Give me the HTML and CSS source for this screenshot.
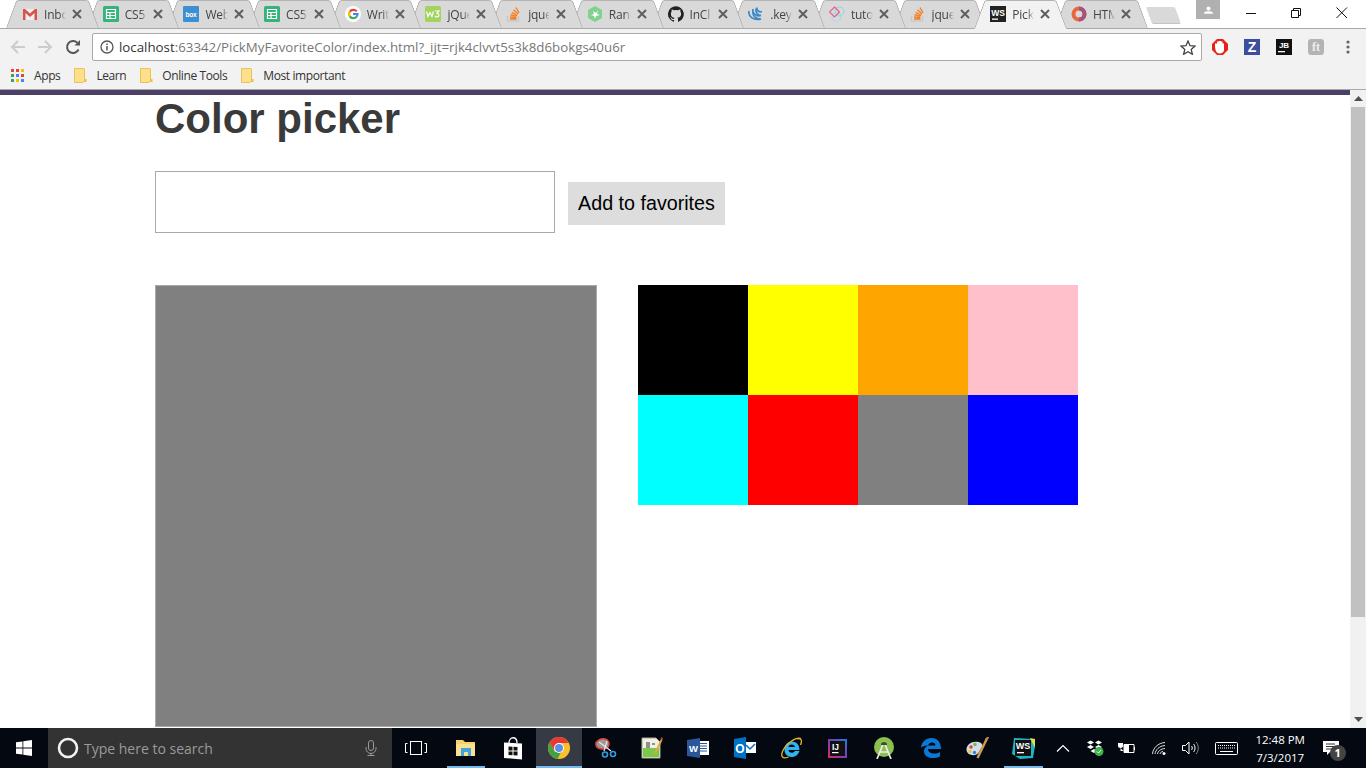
FILE: index.html
```html
<!DOCTYPE html>
<html lang="en">
<head>
    <meta charset="UTF-8">
    <meta name="viewport" content="width=device-width, initial-scale=1.0">
    <title>Color picker</title>
    <link rel="stylesheet" href="styles.css">
</head>
<body>
    <svg class="defs" width="0" height="0">
        <symbol id="i-close" viewBox="0 0 10 10"><path d="M1 1l8 8M9 1l-8 8" stroke="#5f5f5f" stroke-width="2" fill="none"/></symbol>
        <symbol id="i-sheets" viewBox="0 0 16 16"><rect width="16" height="16" rx="1.500" fill="#36b37a"/><path d="M3.500 3.500h9v9h-9zM3.500 6.500h9M3.500 9.500h9M7 6.500v6" fill="none" stroke="#fff" stroke-width="1.200"/></symbol>
        <symbol id="i-so" viewBox="0 0 16 16"><path d="M1.500 10v5h11v-5" fill="none" stroke="#c9c9c9" stroke-width="1.300"/><path d="M4 13h6.500M4 11l6.300.7M4.500 8.800l6 1.600M5.700 6.300l5.500 3M7.500 3.700l4.500 4.300M10 1.500l3 5.300" fill="none" stroke="#f48024" stroke-width="1.400"/></symbol>
        <symbol id="i-ws" viewBox="0 0 16 16"><rect width="16" height="16" fill="#222"/><text x="8" y="9.500" text-anchor="middle" font-family="Liberation Sans" font-size="8.500" font-weight="700" fill="#fff">WS</text><rect x="2" y="12.500" width="6" height="1.300" fill="#fff"/></symbol>
        <symbol id="i-folder" viewBox="0 0 13 15"><path d="M.5.500h9.500l.5.500v11.500l-1.500 2H.5z" fill="#ffe08a" stroke="#e8c25a"/><rect x="10" y="11" width="2.500" height="3" fill="#f0c040"/></symbol>
    </svg>

    <div class="browser">
        <div class="tabstrip">
            <div class="tabs">
                <div class="tab">
                    <svg class="favicon" viewBox="0 0 16 16"><path d="M1 3h14v11H1z" fill="#eee"/><path d="M1 14V3h2l5 4.500L13 3h2v11h-2.500V7L8 11 3.500 7v7z" fill="#d9534a"/></svg>
                    <span class="tab-title">Inbox</span>
                    <svg class="tab-close"><use href="#i-close"/></svg>
                </div>
                <div class="tab">
                    <svg class="favicon"><use href="#i-sheets"/></svg>
                    <span class="tab-title">CS5</span>
                    <svg class="tab-close"><use href="#i-close"/></svg>
                </div>
                <div class="tab">
                    <svg class="favicon" viewBox="0 0 16 16"><rect width="16" height="16" rx="1" fill="#3d8fd1"/><text x="8" y="10.500" text-anchor="middle" font-family="Liberation Sans" font-size="6.500" font-weight="700" fill="#fff">box</text></svg>
                    <span class="tab-title">Web</span>
                    <svg class="tab-close"><use href="#i-close"/></svg>
                </div>
                <div class="tab">
                    <svg class="favicon"><use href="#i-sheets"/></svg>
                    <span class="tab-title">CS5</span>
                    <svg class="tab-close"><use href="#i-close"/></svg>
                </div>
                <div class="tab">
                    <svg class="favicon" viewBox="0 0 16 16"><circle cx="8" cy="8" r="8" fill="#fff"/><path d="M12.500 4.600A5.600 5.600 0 0 0 4 4.800L5.600 6.500A3.500 3.500 0 0 1 11 6z" fill="#ea4335"/><path d="M4 4.800a5.600 5.600 0 0 0 0 6.400l1.600-1.700a3.500 3.500 0 0 1 0-3z" fill="#fbbc05"/><path d="M4 11.200a5.600 5.600 0 0 0 8.300.4l-1.700-1.400a3.500 3.500 0 0 1-5-.7z" fill="#34a853"/><path d="M8 7v2h3.300a3 3 0 0 1-.7 1.200l1.700 1.400A5.500 5.500 0 0 0 13.600 7z" fill="#4285f4"/></svg>
                    <span class="tab-title">Write</span>
                    <svg class="tab-close"><use href="#i-close"/></svg>
                </div>
                <div class="tab">
                    <svg class="favicon" viewBox="0 0 16 16"><rect width="16" height="16" rx="2" fill="#a2d35f"/><path d="M1.500 5.500l1.500 5 2-4 2 4 1.500-5M10 5h4l-2 2.500c2.500 0 2.500 3.500 0 3.500-1 0-1.500-.5-2-1" fill="none" stroke="#fff" stroke-width="1.200"/></svg>
                    <span class="tab-title">jQuery</span>
                    <svg class="tab-close"><use href="#i-close"/></svg>
                </div>
                <div class="tab">
                    <svg class="favicon"><use href="#i-so"/></svg>
                    <span class="tab-title">jquery</span>
                    <svg class="tab-close"><use href="#i-close"/></svg>
                </div>
                <div class="tab">
                    <svg class="favicon" viewBox="0 0 16 16"><path d="M8 0l7 4v8l-7 4-7-4V4z" fill="#7fd18c"/><path d="M4 9l3-1-1-3 3 2 2-3-1 4 3 1-4 1-1 3-1-3z" fill="#fff"/></svg>
                    <span class="tab-title">Rand</span>
                    <svg class="tab-close"><use href="#i-close"/></svg>
                </div>
                <div class="tab">
                    <svg class="favicon" viewBox="0 0 16 16"><path d="M8 .2a8 8 0 0 0-2.500 15.600c.4.1.5-.2.5-.4v-1.400c-2.200.5-2.700-1-2.700-1-.4-.9-.9-1.200-.9-1.200-.7-.5.1-.5.1-.5.800.1 1.200.8 1.200.8.700 1.200 1.900.9 2.300.7.100-.5.300-.9.500-1.100-1.800-.2-3.600-.9-3.600-4 0-.9.300-1.600.8-2.100-.1-.2-.4-1 .1-2.100 0 0 .7-.2 2.200.8a7.600 7.600 0 0 1 4 0c1.500-1 2.200-.8 2.200-.8.400 1.100.2 1.900.1 2.100.5.600.8 1.300.8 2.100 0 3.100-1.900 3.700-3.700 3.900.3.300.6.700.6 1.500v2.200c0 .2.100.5.600.4A8 8 0 0 0 8 .2z" fill="#222"/></svg>
                    <span class="tab-title">InCl</span>
                    <svg class="tab-close"><use href="#i-close"/></svg>
                </div>
                <div class="tab">
                    <svg class="favicon" viewBox="0 0 16 16"><path d="M1 5c-1 5 4 10 12 8-5 0-9-3-8-8M5 3c-1 4 3 8 8 6.500-3.500 0-5.500-3-5-7M9 1.500c-.5 3 2 5 5 4" fill="none" stroke="#3f88c5" stroke-width="1.700"/></svg>
                    <span class="tab-title">.keyup</span>
                    <svg class="tab-close"><use href="#i-close"/></svg>
                </div>
                <div class="tab">
                    <svg class="favicon" viewBox="0 0 16 16"><circle cx="10.500" cy="5.500" r="4.500" fill="none" stroke="#7fe0d8"/><circle cx="7.500" cy="11" r="4.500" fill="none" stroke="#a8d4f5"/><path d="M5.500 1l5 5-5 5-5-5z" fill="none" stroke="#ef5b8d" stroke-width="1.200"/></svg>
                    <span class="tab-title">tutorial</span>
                    <svg class="tab-close"><use href="#i-close"/></svg>
                </div>
                <div class="tab">
                    <svg class="favicon"><use href="#i-so"/></svg>
                    <span class="tab-title">jquery</span>
                    <svg class="tab-close"><use href="#i-close"/></svg>
                </div>
                <div class="tab tab-active">
                    <svg class="favicon"><use href="#i-ws"/></svg>
                    <span class="tab-title">Pick</span>
                    <svg class="tab-close"><use href="#i-close"/></svg>
                </div>
                <div class="tab">
                    <svg class="favicon" viewBox="0 0 16 16"><circle cx="8" cy="8" r="5.500" fill="none" stroke="#e8673c" stroke-width="4"/><path d="M8 2.500a5.500 5.500 0 0 1 0 11" fill="none" stroke="#a4527e" stroke-width="4"/></svg>
                    <span class="tab-title">HTML</span>
                    <svg class="tab-close"><use href="#i-close"/></svg>
                </div>
            </div>
            <div class="newtab"></div>
            <div class="win-controls">
                <div class="profile">
                    <svg width="9" height="8" viewBox="0 0 12 10"><circle cx="6" cy="3" r="2.700" fill="#fff"/><path d="M0 10c0-3 3-3.500 6-3.500s6 .5 6 3.500z" fill="#fff"/></svg>
                </div>
                <div class="win-btn"><svg width="12" height="12" viewBox="0 0 12 12"><path d="M1 6.500h10" stroke="#111"/></svg></div>
                <div class="win-btn"><svg width="12" height="12" viewBox="0 0 12 12"><path d="M1.500 3.500h7v7h-7zM3.500 3.500V1.500h7v7H8.500" fill="none" stroke="#111"/></svg></div>
                <div class="win-btn"><svg width="12" height="12" viewBox="0 0 12 12"><path d="M.5.500l10.500 10.500M11 .5L.5 11" stroke="#111" fill="none"/></svg></div>
            </div>
        </div>

        <div class="toolbar">
            <div class="tool-btn"><svg width="16" height="16" viewBox="0 0 16 16"><path d="M15 8H2M8 2L2 8l6 6" fill="none" stroke="#ccc" stroke-width="2"/></svg></div>
            <div class="tool-btn"><svg width="16" height="16" viewBox="0 0 16 16"><path d="M1 8h13M8 2l6 6-6 6" fill="none" stroke="#ccc" stroke-width="2"/></svg></div>
            <div class="tool-btn"><svg width="16" height="16" viewBox="0 0 16 16"><path d="M13.500 10.500A6 6 0 1 1 12.300 3.800" fill="none" stroke="#555" stroke-width="2"/><path d="M9.500 6.500H15V1z" fill="#555"/></svg></div>
            <div class="omnibox">
                <svg class="info-icon" width="14" height="14" viewBox="0 0 14 14"><circle cx="7" cy="7" r="6" fill="none" stroke="#555" stroke-width="1.300"/><path d="M7 6v4.500M7 3.500v1.500" stroke="#555" stroke-width="1.500"/></svg>
                <span class="url"><span class="url-host">localhost</span>:63342/PickMyFavoriteColor/index.html?_ijt=rjk4clvvt5s3k8d6bokgs40u6r</span>
                <svg width="16" height="15" viewBox="0 0 16 15"><path d="M8 1l2 4.700 5 .4-3.800 3.300 1.200 4.900L8 11.700l-4.400 2.600 1.200-4.900L1 6.100l5-.4z" fill="none" stroke="#444" stroke-width="1.300"/></svg>
            </div>
            <div class="ext-btn"><svg width="16" height="16" viewBox="0 0 16 16"><path d="M5 0h6l5 5v6l-5 5H5l-5-5V5z" fill="#e8211d"/><path d="M3 8V4.500h2V2.500h1.500V2h2.500v.5h1.500v2h1.500V11c0 2-2 3.500-4.500 3.500S4.500 13 3.500 11z" fill="#fff"/></svg></div>
            <div class="ext-btn"><svg width="16" height="16" viewBox="0 0 16 16"><rect width="16" height="16" fill="#3b4f9c"/><text x="8" y="13" text-anchor="middle" font-family="Liberation Sans" font-size="14" font-weight="700" fill="#fff">Z</text></svg></div>
            <div class="ext-btn"><svg width="16" height="16" viewBox="0 0 16 16"><rect width="16" height="16" fill="#111"/><text x="8" y="9" text-anchor="middle" font-family="Liberation Sans" font-size="8" font-weight="700" fill="#fff">JB</text><rect x="2" y="12" width="7" height="1.300" fill="#fff"/></svg></div>
            <div class="ext-btn"><svg width="16" height="16" viewBox="0 0 16 16"><rect width="16" height="16" rx="3" fill="#b4b4b4"/><text x="8" y="12" text-anchor="middle" font-family="Liberation Serif" font-size="12" font-weight="700" fill="#eee">ft</text></svg></div>
            <div class="ext-btn"><svg width="4" height="14" viewBox="0 0 4 14"><circle cx="2" cy="2" r="1.600" fill="#666"/><circle cx="2" cy="7" r="1.600" fill="#666"/><circle cx="2" cy="12" r="1.600" fill="#666"/></svg></div>
        </div>

        <div class="bookmarks">
            <div class="bookmark bookmark-apps">
                <svg width="13" height="13" viewBox="0 0 13 13">
                    <rect width="3" height="3" fill="#ea4335"/><rect x="5" width="3" height="3" fill="#ea4335"/><rect x="10" width="3" height="3" fill="#fbbc05"/>
                    <rect y="5" width="3" height="3" fill="#34a853"/><rect x="5" y="5" width="3" height="3" fill="#4285f4"/><rect x="10" y="5" width="3" height="3" fill="#ea4335"/>
                    <rect y="10" width="3" height="3" fill="#34a853"/><rect x="5" y="10" width="3" height="3" fill="#fbbc05"/><rect x="10" y="10" width="3" height="3" fill="#4285f4"/>
                </svg>
                Apps
            </div>
            <div class="bookmark"><svg class="folder"><use href="#i-folder"/></svg>Learn</div>
            <div class="bookmark"><svg class="folder"><use href="#i-folder"/></svg>Online Tools</div>
            <div class="bookmark"><svg class="folder"><use href="#i-folder"/></svg>Most important</div>
        </div>

        <div class="viewport">
            <div class="page">
                <h1>Color picker</h1>
                <div class="add-row">
                    <input type="text" class="color-input">
                    <button class="add-btn">Add to favorites</button>
                </div>
                <div class="workspace">
                    <div class="preview"></div>
                    <div class="swatches">
                        <div class="swatch swatch-black"></div>
                        <div class="swatch swatch-yellow"></div>
                        <div class="swatch swatch-orange"></div>
                        <div class="swatch swatch-pink"></div>
                        <div class="swatch swatch-cyan"></div>
                        <div class="swatch swatch-red"></div>
                        <div class="swatch swatch-gray"></div>
                        <div class="swatch swatch-blue"></div>
                    </div>
                </div>
            </div>
            <div class="scrollbar">
                <div class="scroll-arrow"><svg width="9" height="5" viewBox="0 0 9 5"><path d="M4.500 0L9 5H0z" fill="#505050"/></svg></div>
                <div class="scroll-track"><div class="scroll-thumb"></div></div>
                <div class="scroll-arrow"><svg width="9" height="5" viewBox="0 0 9 5"><path d="M0 0h9L4.500 5z" fill="#505050"/></svg></div>
            </div>
        </div>
    </div>

    <div class="taskbar">
        <div class="start">
            <svg width="16" height="16" viewBox="0 0 16 16"><path d="M0 2.300l6.500-.9v6.200H0zM7.300 1.300L16 0v7.600H7.300zM0 8.400h6.500v6.200L0 13.700zM7.300 8.400H16V16l-8.700-1.300z" fill="#fff"/></svg>
        </div>
        <div class="search">
            <svg width="22" height="22" viewBox="0 0 22 22"><circle cx="11" cy="11" r="9" fill="none" stroke="#f2f2f2" stroke-width="2.600"/></svg>
            <span class="search-text">Type here to search</span>
            <svg class="mic" width="12" height="16" viewBox="0 0 12 16"><rect x="3.500" y=".5" width="5" height="10" rx="2.500" fill="none" stroke="#9a9a9a"/><path d="M1 7v1.500a5 5 0 0 0 10 0V7M6 13.500v2M2.500 15.500h7" fill="none" stroke="#9a9a9a"/></svg>
        </div>
        <div class="taskview">
            <svg width="22" height="14" viewBox="0 0 22 14"><rect x="5.500" y=".5" width="11" height="13" fill="none" stroke="#fff"/><path d="M2.500 2.500h-2v9h2M19.500 2.500h2v9h-2" fill="none" stroke="#fff"/></svg>
        </div>
        <div class="task-app task-open">
            <svg width="20" height="18" viewBox="0 0 20 18"><path d="M0 1h7l2 2h10v14H0z" fill="#f6d26b"/><path d="M0 5h19v12H0z" fill="#fbe08f"/><path d="M5 9h10v8h-3v-4H8v4H5z" fill="#3fa4e0"/></svg>
        </div>
        <div class="task-app">
            <svg width="20" height="23" viewBox="0 0 20 23"><path d="M6 6c0-7 8-7 8 0" fill="none" stroke="#fff" stroke-width="1.300"/><path d="M1 5.500l18 1v16l-18-1.500z" fill="#fff"/><path d="M5.500 9.500l4 .2v3.800h-4zM10.500 9.800l4 .2v3.500h-4zM5.500 14.500h4v3.800l-4-.3zM10.500 14.500h4v4l-4-.3z" fill="#111"/></svg>
        </div>
        <div class="task-app task-active">
            <svg width="22" height="22" viewBox="0 0 22 22"><circle cx="11" cy="11" r="11" fill="#fbc02d"/><path d="M11 0a11 11 0 0 0-9.500 5.500L6 13 11 6h9.500A11 11 0 0 0 11 0z" fill="#e53935"/><path d="M1.500 5.500A11 11 0 0 0 9.500 21.900L13 15H7z" fill="#43a047"/><circle cx="11" cy="11" r="5" fill="#fff"/><circle cx="11" cy="11" r="4" fill="#5c8fe6"/></svg>
        </div>
        <div class="task-app">
            <svg width="22" height="20" viewBox="0 0 22 20"><path d="M1 7c-1-4 5-7 9-6s5 5 3 8-11 3-12-2z" fill="#9a9a9a" stroke="#d8443c" stroke-width="1.500"/><path d="M4 4l12 9M12 3L9 13" stroke="#e8e8e8" stroke-width="1.200"/><circle cx="18" cy="16" r="2.500" fill="none" stroke="#2f9fe0" stroke-width="1.600"/><circle cx="10" cy="16.500" r="2.500" fill="none" stroke="#2f9fe0" stroke-width="1.600"/></svg>
        </div>
        <div class="task-app">
            <svg width="22" height="22" viewBox="0 0 22 22"><path d="M1 1h14l4 4v16H1z" fill="#f0f0e4" stroke="#a8a890"/><path d="M2 11h16v9H2z" fill="#7cc84a"/><path d="M6 5v6M8 5v6M11 7h3" stroke="#333"/><path d="M20.500 1L14 14l-1.500 3 3-2L21.500 3z" fill="#e8a83c"/><path d="M20.500 0l1.500 1-1 2-1.500-1z" fill="#a84a3c"/></svg>
        </div>
        <div class="task-app">
            <svg width="22" height="20" viewBox="0 0 22 20"><path d="M8 3h14v14H8z" fill="#fff"/><path d="M13 5.500h7M13 8h7M13 10.500h7M13 13h7" stroke="#2b579a"/><path d="M0 2l13-2v20L0 18z" fill="#2b579a"/><text x="6.500" y="13.500" text-anchor="middle" font-family="Liberation Sans" font-size="9.500" font-weight="700" fill="#fff">W</text></svg>
        </div>
        <div class="task-app">
            <svg width="22" height="22" viewBox="0 0 22 22"><path d="M10 5h12v11H10z" fill="#fff"/><path d="M12 8l4 4 5-5" fill="none" stroke="#0072c6" stroke-width="1.500"/><path d="M0 2l12-2v22L0 20z" fill="#0072c6"/><text x="6" y="15.500" text-anchor="middle" font-family="Liberation Sans" font-size="12" font-weight="700" fill="#fff">O</text></svg>
        </div>
        <div class="task-app">
            <svg width="22" height="22" viewBox="0 0 22 22"><path d="M19.500 13H8.500c.2 3 4.500 4 6.500 1h4.500c-1.500 4.500-5 6-8 6-4 0-7-3-7-7 0-5 3-8.500 7.500-8.500S19.500 8 19.500 13zM8.500 10h6.500c-.2-3.200-6-3.400-6.500 0z" fill="#31b4ee" fill-rule="evenodd"/><path d="M21 1.500c-5-2-15 5-18.500 13-2 5 0 8 6 5.500M17 2c3-1 6 0 3.500 6" fill="none" stroke="#eab52b" stroke-width="1.300"/></svg>
        </div>
        <div class="task-app">
            <svg width="19" height="19" viewBox="0 0 19 19"><defs><linearGradient id="ij-edge" x1="0" y1="1" x2="1" y2="0"><stop offset="0" stop-color="#e0246f"/><stop offset=".5" stop-color="#7a3fb0"/><stop offset="1" stop-color="#1c7fe0"/></linearGradient></defs><rect width="19" height="19" fill="url(#ij-edge)"/><rect x="2" y="2" width="15" height="15" fill="#111"/><text x="4" y="10.500" font-family="Liberation Sans" font-size="8.500" font-weight="700" fill="#fff">IJ</text><rect x="4" y="13" width="6.500" height="1.200" fill="#fff"/></svg>
        </div>
        <div class="task-app">
            <svg width="20" height="22" viewBox="0 0 20 22"><circle cx="10" cy="10" r="10" fill="#8cc152"/><path d="M10 5L3 22M10 5l7 17M6.500 15h7" fill="none" stroke="#ececec" stroke-width="1.700"/><path d="M7 8a3 3 0 0 1 6 0z" fill="#35502a"/></svg>
        </div>
        <div class="task-app">
            <svg width="20" height="20" viewBox="0 0 20 20"><path d="M0 9C1 3 6 0 10.500 0 16.500 0 20 4.500 20 11H7c0 4.500 7 6 12 3v4.500c-6 3-15 2-16-4.500-.3-2.500 1-5 4-6.500-3 .2-5.500.8-7 2zM7 7.500h7.500C14.500 3.500 8 3.500 7 7.500z" fill="#0a78d7" fill-rule="evenodd"/></svg>
        </div>
        <div class="task-app">
            <svg width="23" height="23" viewBox="0 0 23 23"><path d="M.5 13C0 7 7 3.500 12.500 5c4 1 5 4 3 6s-2 5-5 6.500S1 18 .5 13z" fill="#cfe0ea"/><circle cx="5" cy="10" r="1.700" fill="#e53935"/><circle cx="9" cy="7.500" r="1.700" fill="#7cb342"/><circle cx="4" cy="14.500" r="1.700" fill="#fbc02d"/><circle cx="8.500" cy="15.500" r="1.700" fill="#1e88e5"/><path d="M21 1.500L11.500 21" stroke="#d89a4a" stroke-width="2.400"/><path d="M19.500 3l3-3" stroke="#b88a5a" stroke-width="2"/></svg>
        </div>
        <div class="task-app task-open">
            <svg width="23" height="21" viewBox="0 0 23 21"><path d="M2 0l18 1 3 7-2 12-13 1-8-5z" fill="#1cb6c4"/><path d="M18 0l5 1v9z" fill="#e8e04a"/><rect x="3" y="2" width="16" height="16" fill="#111"/><text x="11" y="11" text-anchor="middle" font-family="Liberation Sans" font-size="9" font-weight="700" fill="#fff">WS</text><rect x="5" y="14" width="7" height="1.300" fill="#fff"/></svg>
        </div>

        <div class="tray-item">
            <svg width="14" height="8" viewBox="0 0 14 8"><path d="M1 7.500l6-6 6 6" fill="none" stroke="#fff" stroke-width="1.200"/></svg>
        </div>
        <div class="tray-item">
            <svg width="18" height="16" viewBox="0 0 18 16"><path d="M1 2.500L4.500 .5 8 2.500 4.500 4.500zM9 2.500l3.500-2 3.500 2-3.500 2zM1 7l3.500-2L8 7 4.500 9zM9 7l3.500-2L16 7l-3.500 2zM4.500 11L8 9l3.500 2L8 13z" fill="#fff"/><circle cx="13" cy="11.500" r="4.500" fill="#3cb44a"/><path d="M11 11.500l1.500 1.500 2.500-3" fill="none" stroke="#fff"/></svg>
        </div>
        <div class="tray-item">
            <svg width="17" height="12" viewBox="0 0 17 12"><path d="M6 2.500h10v8H6z" fill="none" stroke="#fff"/><path d="M6 3h5v7H6zM0 1v3c0 1 1 2 2.500 2S5 5 5 4V1zM2.500 6v3h3" fill="#fff"/><rect x="16" y="5" width="1" height="3" fill="#fff"/></svg>
        </div>
        <div class="tray-item">
            <svg width="14" height="13" viewBox="0 0 14 13"><path d="M.5 12C1 6 6 1 13 .5M3 12c.5-4 4-8 10-8.500M5.500 12c.5-3 3-5 7.500-5.500M8 12c.3-1.500 1.500-2.500 3-2.500" fill="none" stroke="#ddd"/><circle cx="12" cy="11.500" r="1.500" fill="#fff"/></svg>
        </div>
        <div class="tray-item">
            <svg width="17" height="14" viewBox="0 0 17 14"><path d="M.5 4.500h3L7 1v12L3.500 9.500h-3z" fill="none" stroke="#fff"/><path d="M9.500 5c1 1 1 3 0 4M11.500 3c2 2 2 6 0 8" fill="none" stroke="#fff"/><path d="M14 1c3 3 3 9 0 12" fill="none" stroke="#888"/></svg>
        </div>
        <div class="tray-keyboard">
            <svg width="23" height="13" viewBox="0 0 23 13"><rect x=".5" y=".5" width="22" height="12" rx="1" fill="none" stroke="#fff"/><path d="M3 3.500h17M3 6h17" stroke="#fff" stroke-dasharray="1 1"/><path d="M5 9.500h13" stroke="#fff"/></svg>
        </div>
        <div class="clock">
            <span>12:48 PM</span>
            <span>7/3/2017</span>
        </div>
        <div class="notify">
            <svg width="16" height="14" viewBox="0 0 16 14"><path d="M0 0h16v11H7l-3 3v-3H0z" fill="#fff"/><path d="M3 3h9M3 5.500h9M3 8h6" stroke="#333"/></svg>
            <span class="notify-badge">1</span>
        </div>
    </div>
</body>
</html>
```

FILE: styles.css
```css
* {
    box-sizing: border-box;
}
html, body {
    margin: 0;
    height: 768px;
    overflow: hidden;
}
body {
    font-family: 'Liberation Sans', Arial, sans-serif;
    background-color: white;
    display: flex;
    flex-direction: column;
}
.defs {
    display: block;
    height: 0;
}
.browser {
    height: 728px;
    display: flex;
    flex-direction: column;
}

/* tab strip */
.tabstrip {
    height: 29px;
    flex: none;
    display: flex;
    border-bottom: 1px solid #a9a9a9;
    padding-left: 6px;
    background-color: white;
}
.tabs {
    display: flex;
}
.tab {
    position: relative;
    width: 92.7px;
    height: 28px;
    margin-right: -12px;
    padding: 0 16.5px 0 16px;
    display: flex;
    align-items: center;
    gap: 6px;
    font-family: 'Open Sans', sans-serif;
    font-size: 12px;
    letter-spacing: -0.2px;
    color: #444;
}
.tab::before,
.tab::after {
    content: "";
    position: absolute;
    top: 0;
    bottom: 0;
    width: 55%;
    background-color: #d9d9d9;
    border-top: 1px solid #b4b4b4;
    z-index: -1;
}
.tab::before {
    left: 0;
    transform: skewX(-20deg);
    transform-origin: bottom left;
    border-left: 1px solid #a9a9a9;
    border-top-left-radius: 3px;
}
.tab::after {
    right: 0;
    transform: skewX(20deg);
    transform-origin: bottom right;
    border-right: 1px solid #a9a9a9;
    border-top-right-radius: 3px;
}
.tab:nth-child(1) { z-index: 14; }
.tab:nth-child(2) { z-index: 13; }
.tab:nth-child(3) { z-index: 12; }
.tab:nth-child(4) { z-index: 11; }
.tab:nth-child(5) { z-index: 10; }
.tab:nth-child(6) { z-index: 9; }
.tab:nth-child(7) { z-index: 8; }
.tab:nth-child(8) { z-index: 7; }
.tab:nth-child(9) { z-index: 6; }
.tab:nth-child(10) { z-index: 5; }
.tab:nth-child(11) { z-index: 4; }
.tab:nth-child(12) { z-index: 3; }
.tab:nth-child(14) { z-index: 1; }
.tab.tab-active {
    z-index: 20;
    height: 29px;
    padding-bottom: 1px;
}
.tab-active::before,
.tab-active::after {
    background-color: #f2f2f2;
}
.favicon {
    width: 16px;
    height: 16px;
    flex: none;
}
.tab-title {
    flex: 1;
    min-width: 0;
    overflow: hidden;
    white-space: nowrap;
    -webkit-mask-image: linear-gradient(to right, black 70%, transparent);
    mask-image: linear-gradient(to right, black 70%, transparent);
}
.tab-close {
    width: 10px;
    height: 10px;
    flex: none;
}
.newtab {
    width: 29px;
    height: 17px;
    margin: 7px 0 0 13px;
    background-color: #d9d9d9;
    border-bottom: 1px solid #c4c4c4;
    border-radius: 2px;
    transform: skewX(20deg);
}
.win-controls {
    margin-left: auto;
    padding-right: 1.5px;
    display: flex;
    align-items: flex-start;
}
.profile {
    width: 24px;
    height: 19px;
    margin-right: 8px;
    background-color: #b0b0b0;
    display: flex;
    align-items: center;
    justify-content: center;
}
.win-btn {
    width: 45.5px;
    height: 26px;
    display: flex;
    align-items: center;
    justify-content: center;
}

/* toolbar */
.toolbar {
    height: 33px;
    flex: none;
    background-color: #f2f2f2;
    display: flex;
    align-items: center;
    padding: 4px 2px 1px 4px;
}
.tool-btn {
    width: 27.5px;
    display: flex;
    justify-content: center;
}
.omnibox {
    flex: 1;
    height: 28px;
    margin: 0 2px 0 5.5px;
    padding: 0 5px 0 7px;
    background-color: white;
    border: 1px solid #a9a9a9;
    border-radius: 2px;
    display: flex;
    align-items: center;
}
.info-icon {
    flex: none;
    margin-right: 5px;
}
.url {
    flex: 1;
    font-family: 'Open Sans', sans-serif;
    font-size: 13.3px;
    color: #777;
    white-space: nowrap;
}
.url-host {
    color: #333;
}
.ext-btn {
    width: 32px;
    display: flex;
    justify-content: center;
}

/* bookmarks */
.bookmarks {
    height: 28px;
    flex: none;
    background-color: #f2f2f2;
    border-bottom: 1px solid #a9a9a9;
    display: flex;
    align-items: center;
    padding-left: 11px;
    font-family: 'Open Sans', sans-serif;
    font-size: 12px;
    letter-spacing: -0.4px;
    color: #333;
}
.bookmark {
    display: flex;
    align-items: center;
    margin-right: 14px;
}
.bookmark-apps {
    gap: 10px;
    margin-right: 14px;
}
.folder {
    width: 13px;
    height: 15px;
    margin-right: 9px;
}

/* page */
.viewport {
    flex: 1;
    min-height: 0;
    display: flex;
}
.page {
    flex: 1;
    min-width: 0;
    border-top: 5px solid #4b3f66;
    padding-left: 155px;
    overflow: hidden;
}
h1 {
    margin: 0 0 28px;
    font-size: 42px;
    line-height: 48px;
    font-weight: bold;
    color: #3a3a3a;
}
.add-row {
    display: flex;
    align-items: flex-start;
    gap: 13px;
}
.color-input {
    width: 400px;
    height: 62px;
    background-color: white;
    border: 1px solid #a9a9a9;
    outline: none;
    padding: 0;
}
.add-btn {
    width: 157px;
    height: 43px;
    margin-top: 11px;
    background-color: #ddd;
    border: none;
    padding: 0;
    font-family: 'Liberation Sans', Arial, sans-serif;
    font-size: 19.7px;
    color: black;
}
.workspace {
    margin-top: 52px;
    display: flex;
    gap: 41px;
    align-items: flex-start;
}
.preview {
    width: 442px;
    height: 442px;
    flex: none;
    background-color: #808080;
    border: 1px solid #a9a9a9;
}
.swatches {
    display: grid;
    grid-template-columns: repeat(4, 110px);
    grid-auto-rows: 110px;
}
.swatch-black { background-color: black; }
.swatch-yellow { background-color: yellow; }
.swatch-orange { background-color: orange; }
.swatch-pink { background-color: pink; }
.swatch-cyan { background-color: cyan; }
.swatch-red { background-color: red; }
.swatch-gray { background-color: gray; }
.swatch-blue { background-color: blue; }

/* scrollbar */
.scrollbar {
    width: 16px;
    flex: none;
    background-color: #f1f1f1;
    display: flex;
    flex-direction: column;
}
.scroll-arrow {
    height: 17px;
    flex: none;
    display: flex;
    align-items: center;
    justify-content: center;
}
.scroll-track {
    flex: 1;
    padding: 0 1px;
}
.scroll-thumb {
    height: 510px;
    background-color: #c1c1c1;
}

/* taskbar */
.taskbar {
    height: 40px;
    flex: none;
    background-color: #040811;
    display: flex;
    align-items: center;
    color: white;
}
.start {
    width: 48px;
    display: flex;
    justify-content: center;
}
.search {
    width: 344px;
    height: 40px;
    background-color: #333;
    padding: 0 15px 0 9px;
    display: flex;
    align-items: center;
    gap: 5px;
}
.search-text {
    flex: 1;
    font-family: 'Open Sans', sans-serif;
    font-size: 14px;
    color: #9a9a9a;
}
.taskview {
    width: 51px;
    display: flex;
    justify-content: center;
    padding-right: 3px;
}
.task-app {
    position: relative;
    width: 46.45px;
    height: 40px;
    flex: none;
    display: flex;
    align-items: center;
    justify-content: center;
}
.task-open::after {
    content: "";
    position: absolute;
    left: 4px;
    right: 4px;
    bottom: 0;
    height: 2px;
    background-color: #76b9ed;
}
.task-active {
    background-color: #353a44;
    border-bottom: 2px solid #76b9ed;
    padding-top: 2px;
}
.tray-item {
    width: 32px;
    display: flex;
    justify-content: center;
}
.tray-keyboard {
    width: 40px;
    display: flex;
    justify-content: center;
}
.clock {
    width: 64px;
    padding-left: 3px;
    display: flex;
    flex-direction: column;
    align-items: center;
    gap: 3px;
    font-family: 'Open Sans', sans-serif;
    font-size: 11.5px;
    line-height: 15px;
}
.notify {
    position: relative;
    width: 40px;
    display: flex;
    justify-content: center;
}
.notify-badge {
    position: absolute;
    left: 19px;
    top: 4px;
    width: 16px;
    height: 16px;
    border-radius: 50%;
    background-color: #444;
    font-family: 'Open Sans', sans-serif;
    font-size: 11px;
    font-weight: 700;
    line-height: 16px;
    text-align: center;
}
```
